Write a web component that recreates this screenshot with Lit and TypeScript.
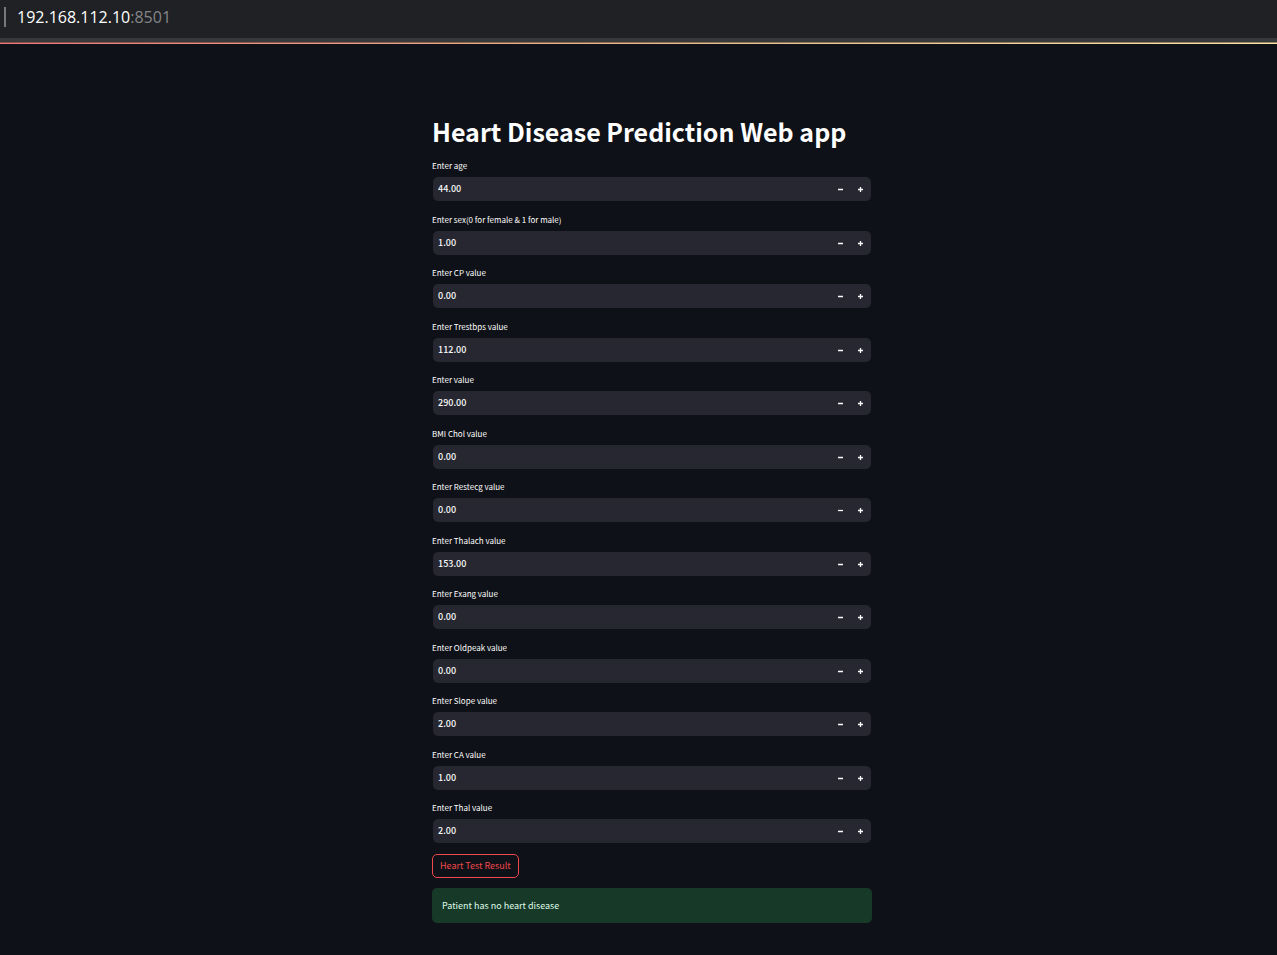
import { LitElement, html, css } from "lit";
import { customElement, property, state } from "lit/decorators.js";

@customElement("number-field")
class NumberField extends LitElement {
  @property() label = "";
  @property() value = "0.00";

  static styles = css`
    :host {
      display: block;
    }
    .label {
      display: block;
      height: 16px;
      margin-bottom: 3px;
      font-size: 8px;
      line-height: 16px;
      color: #ffffff;
    }
    .box {
      display: flex;
      align-items: stretch;
      height: 24px;
      margin: 0 1px;
      border-radius: 5px;
      background: #262730;
      overflow: hidden;
    }
    .input {
      flex: 1;
      min-width: 0;
      padding: 0 5px 1px;
      border: 0;
      outline: 0;
      background: transparent;
      color: #fafafa;
      font: inherit;
      font-size: 9px;
      font-weight: 500;
    }
    .step {
      display: flex;
      align-items: center;
      justify-content: center;
      width: 20px;
      padding: 0;
      border: 0;
      background: transparent;
      color: #fafafa;
      cursor: pointer;
    }
    .step svg {
      display: block;
    }
  `;

  private step(delta: number) {
    this.value = (Number(this.value) + delta).toFixed(2);
  }

  render() {
    return html`
      <label class="label" for="field">${this.label}</label>
      <div class="box">
        <input
          class="input"
          id="field"
          type="text"
          inputmode="decimal"
          .value=${this.value}
          @change=${(e: Event) => (this.value = (e.target as HTMLInputElement).value)}
        />
        <button class="step" type="button" aria-label="Decrease" @click=${() => this.step(-1)}>
          <svg width="8" height="8" viewBox="0 0 8 8"><path d="M1 4.5H6" stroke="currentColor" stroke-width="1.3" /></svg>
        </button>
        <button class="step" type="button" aria-label="Increase" @click=${() => this.step(1)}>
          <svg width="8" height="8" viewBox="0 0 8 8"><path d="M1 4.5H6M3.5 2V7" stroke="currentColor" stroke-width="1.3" /></svg>
        </button>
      </div>
    `;
  }
}

@customElement("app-root")
class AppRoot extends LitElement {
  @state() private fields = [
    { label: "Enter age", value: "44.00" },
    { label: "Enter sex(0 for female & 1 for male)", value: "1.00" },
    { label: "Enter CP value", value: "0.00" },
    { label: "Enter Trestbps value", value: "112.00" },
    { label: "Enter value", value: "290.00" },
    { label: "BMI Chol value", value: "0.00" },
    { label: "Enter Restecg value", value: "0.00" },
    { label: "Enter Thalach value", value: "153.00" },
    { label: "Enter Exang value", value: "0.00" },
    { label: "Enter Oldpeak value", value: "0.00" },
    { label: "Enter Slope value", value: "2.00" },
    { label: "Enter CA value", value: "1.00" },
    { label: "Enter Thal value", value: "2.00" },
  ];

  static styles = css`
    :host {
      display: flex;
      flex-direction: column;
      min-height: 100vh;
      box-sizing: border-box;
      background: #0e1117;
      color: #fafafa;
      font-family: "Source Sans Pro", "Noto Sans CJK SC", sans-serif;
    }
    .bar {
      display: flex;
      align-items: center;
      height: 38px;
      box-sizing: border-box;
      padding: 0 4px 5px;
      background: #202124;
      font-family: "Segoe UI", "Open Sans", sans-serif;
      font-size: 16px;
      line-height: 24px;
    }
    .caret {
      width: 2px;
      height: 20px;
      margin-right: 11px;
      background: #77787b;
    }
    .host {
      color: #ffffff;
    }
    .port {
      color: #85868a;
    }
    .edge {
      height: 4px;
      background: #38393a;
    }
    .accent {
      height: 2px;
      background: linear-gradient(to bottom, rgba(0, 0, 0, 0.4) 50%, transparent 50%),
        linear-gradient(to right, #e87c7c, #e8b98c 50%, #fbe3a8);
    }
    .page {
      display: flex;
      justify-content: center;
      padding: 70px 0 32px 27px;
    }
    .column {
      width: 100%;
      max-width: 440px;
    }
    .title {
      margin: 0 0 10px;
      font-size: 25px;
      line-height: 34px;
      font-weight: 700;
      color: #ffffff;
    }
    .row {
      padding-bottom: 10px;
    }
    .row:nth-child(odd) {
      padding-bottom: 11px;
    }
    .submit {
      display: block;
      height: 24px;
      padding: 0 7px 1px;
      border: 1px solid #f0484c;
      border-radius: 5px;
      background: transparent;
      color: #f0484c;
      font: inherit;
      font-size: 9px;
      cursor: pointer;
    }
    .result {
      margin-top: 10px;
      padding: 10px 10px 9px;
      border-radius: 5px;
      background: #173928;
      color: #dffde9;
      font-size: 9px;
      line-height: 16px;
    }
  `;

  render() {
    return html`
      <header class="bar">
        <span class="caret"></span>
        <span class="host">192.168.112.10</span><span class="port">:8501</span>
      </header>
      <div class="edge"></div>
      <div class="accent"></div>
      <main class="page">
        <div class="column">
          <h1 class="title">Heart Disease Prediction Web app</h1>
          <div class="fields">
            ${this.fields.map(
              (f) => html`<div class="row"><number-field .label=${f.label} .value=${f.value}></number-field></div>`
            )}
          </div>
          <button class="submit" type="button">Heart Test Result</button>
          <div class="result" role="status">Patient has no heart disease</div>
        </div>
      </main>
    `;
  }
}
